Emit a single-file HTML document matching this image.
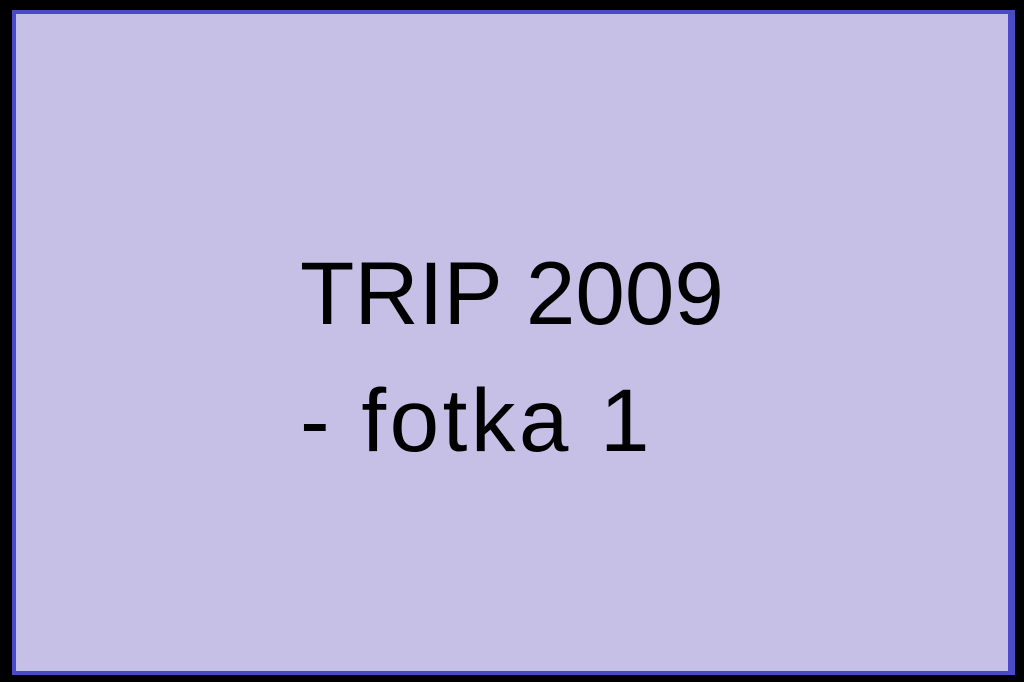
<!DOCTYPE html>
<html><head><style>
html,body{margin:0;padding:0;background:#000;width:1024px;height:682px;overflow:hidden}
.b{position:absolute;left:12px;top:10px;width:992px;height:657px;border:4px solid #4a4ac8;border-right-width:7px;background:#c6bfe6}
.t{position:absolute;left:300px;font-family:"Liberation Sans",sans-serif;font-size:89px;color:#000;line-height:1;white-space:nowrap}
</style></head><body>
<div class="b"></div>
<div class="t" style="top:249px">TRIP 2009</div>
<div class="t" style="top:376px;letter-spacing:3.5px">- fotka 1</div>
</body></html>
